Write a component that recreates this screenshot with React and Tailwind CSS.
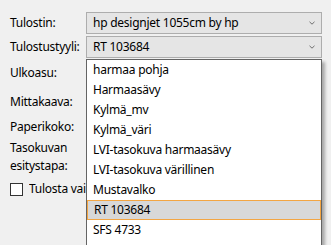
const items = [
  'harmaa pohja',
  'Harmaasävy',
  'Kylmä_mv',
  'Kylmä_väri',
  'LVI-tasokuva harmaasävy',
  'LVI-tasokuva värillinen',
  'Mustavalko',
  'RT 103684',
  'SFS 4733',
]

function Chevron() {
  return (
    <svg width="6" height="4" viewBox="0 0 6 4" className="shrink-0">
      <path d="M0.5 0.8 L3 3.2 L5.5 0.8" fill="none" stroke="#6e6e6e" strokeWidth="1" />
    </svg>
  )
}

function Combo({ value }) {
  return (
    <div className="flex h-[22px] w-[236px] items-center justify-between border border-[#adadad] bg-[#e5e5e5] pl-[6px] pr-[6px]">
      <span className="leading-none">{value}</span>
      <Chevron />
    </div>
  )
}

export default function App() {
  const selected = 'RT 103684'
  return (
    <div
      className="relative h-[245px] w-[331px] overflow-hidden bg-[#f0f0f0] text-[12px] tracking-[-0.25px] text-black"
      style={{ fontFamily: '"Noto Sans", "Open Sans", sans-serif' }}
    >
      <div className="flex flex-col pl-[10px] pt-[12px]">
        <div className="flex items-center">
          <div className="w-[76px]">Tulostin:</div>
          <Combo value="hp designjet 1055cm by hp" />
        </div>
        <div className="mt-[2px] flex items-center">
          <div className="w-[76px]">Tulostustyyli:</div>
          <Combo value="RT 103684" />
        </div>
        <div className="mt-[4px] flex h-[22px] items-center">Ulkoasu:</div>
        <div className="mt-[7px] flex h-[22px] items-center">Mittakaava:</div>
        <div className="mt-[3px] flex h-[22px] items-center">Paperikoko:</div>
        <div className="mt-[1px] flex flex-col leading-[18px]">
          <span>Tasokuvan</span>
          <span>esitystapa:</span>
        </div>
        <div className="mt-[5px] flex items-center gap-[6px]">
          <div className="h-[13px] w-[13px] shrink-0 border border-[#333] bg-white" />
          <span className="w-[57px] overflow-hidden whitespace-nowrap">Tulosta vain valitut</span>
        </div>
      </div>

      {/* open list of Tulostustyyli */}
      <div className="absolute left-[86px] top-[59px] w-[236px] border border-[#646464] bg-white pb-[8px] shadow-[3px_3px_3px_rgba(0,0,0,0.3)]">
        {items.map(it => (
          <div
            key={it}
            className={`flex h-[20px] items-center px-[6px] ${it === selected ? 'border border-[#f3a542] bg-[#d8d8d8] px-[5px]' : ''}`}
          >
            {it}
          </div>
        ))}
      </div>
    </div>
  )
}
